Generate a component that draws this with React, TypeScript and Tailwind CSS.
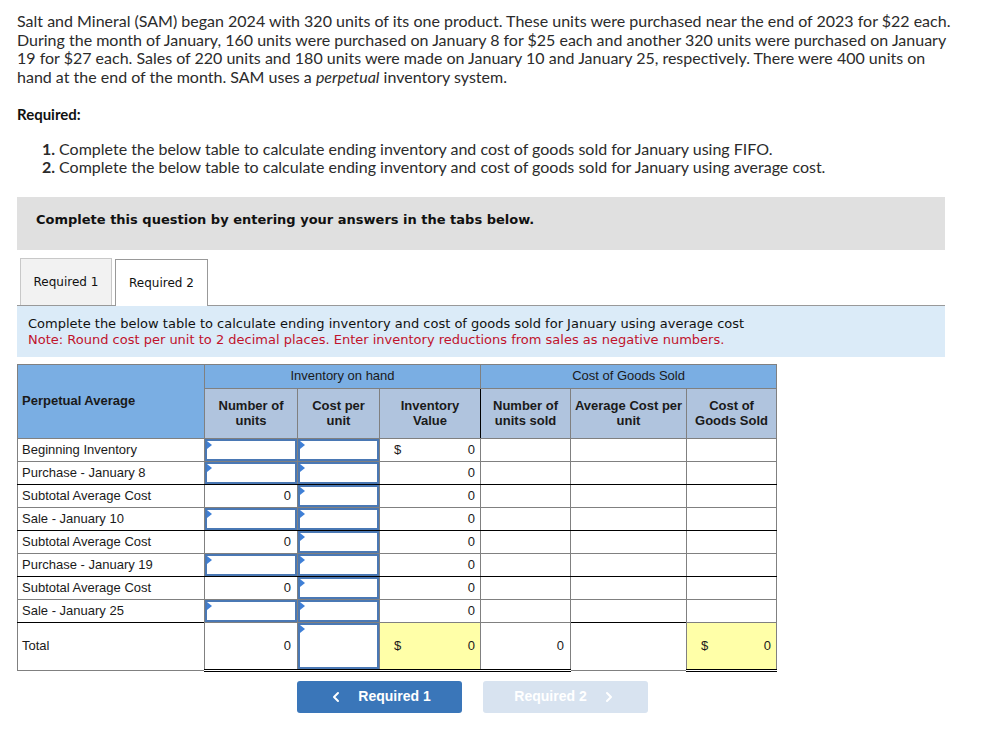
import { ChevronLeft, ChevronRight } from 'lucide-react';

type Row = {
  label: string;
  units: 'input' | '0';
  dollar?: boolean;
};

const rows: Row[] = [
  { label: 'Beginning Inventory', units: 'input', dollar: true },
  { label: 'Purchase - January 8', units: 'input' },
  { label: 'Subtotal Average Cost', units: '0' },
  { label: 'Sale - January 10', units: 'input' },
  { label: 'Subtotal Average Cost', units: '0' },
  { label: 'Purchase - January 19', units: 'input' },
  { label: 'Subtotal Average Cost', units: '0' },
  { label: 'Sale - January 25', units: 'input' },
];

function InputBox({ tall }: { tall?: boolean }) {
  return (
    <div className={`relative w-full border-2 border-[#4a78b4] bg-white ${tall ? 'h-[46px]' : 'h-[22px]'}`}>
      <span className="absolute left-0 top-0 w-0 h-0 border-t-[4px] border-b-[4px] border-l-[5px] border-t-transparent border-b-transparent border-l-[#3f7fd6]" />
    </div>
  );
}

export default function App() {
  return (
    <div className="w-[990px] min-h-[741px] bg-white pl-[17px] pt-[12px] text-[#2b2b2b]">
      {/* Problem text */}
      <p className="font-['Lato',sans-serif] text-[16px] leading-[18.5px] w-[950px]">
        Salt and Mineral (SAM) began 2024 with 320 units of its one product. These units were purchased near the end of 2023 for $22 each.
        <br />
        During the month of January, 160 units were purchased on January 8 for $25 each and another 320 units were purchased on January
        <br />
        19 for $27 each. Sales of 220 units and 180 units were made on January 10 and January 25, respectively. There were 400 units on
        <br />
        hand at the end of the month. SAM uses a <i>perpetual</i> inventory system.
      </p>

      <p className="mt-[17px] font-['Lato',sans-serif] text-[15px] font-bold text-[#111]">Required:</p>

      <div className="mt-[14px] pl-[21px] font-['Lato',sans-serif] text-[16px] leading-[18px]">
        <p><span className="inline-block w-[17px] text-right font-bold">1.</span> Complete the below table to calculate ending inventory and cost of goods sold for January using FIFO.</p>
        <p><span className="inline-block w-[17px] text-right font-bold">2.</span> Complete the below table to calculate ending inventory and cost of goods sold for January using average cost.</p>
      </div>

      {/* Gray banner */}
      <div className="mt-[21px] w-[928px] h-[53px] bg-[#e0e0e0] pl-[19px] pt-[13px] font-['DejaVu_Sans',sans-serif] text-[13px] font-bold text-[#111]">
        Complete this question by entering your answers in the tabs below.
      </div>

      {/* Tabs */}
      <div className="mt-[8px] w-[928px] flex items-end gap-[3px] pl-[3px] border-b border-[#999999]">
        <div className="w-[92px] h-[47px] flex items-center justify-center bg-[#f2f2f2] border border-b-0 border-[#c8c8c8] font-['DejaVu_Sans',sans-serif] text-[12px] text-[#111]">
          Required 1
        </div>
        <div className="w-[93px] h-[47px] -mb-px flex items-center justify-center bg-white border border-b-0 border-[#999999] font-['DejaVu_Sans',sans-serif] text-[12px] text-[#111]">
          Required 2
        </div>
      </div>

      {/* Instruction */}
      <div className="w-[928px] h-[51px] bg-[#dbebf8] pl-[11px] pt-[10px] font-['DejaVu_Sans',sans-serif] text-[13px] leading-[16px]">
        <p className="text-[#111]">Complete the below table to calculate ending inventory and cost of goods sold for January using average cost</p>
        <p className="text-[#c0132c]">Note: Round cost per unit to 2 decimal places. Enter inventory reductions from sales as negative numbers.</p>
      </div>

      {/* Table */}
      <table className="mt-[7px] border-collapse table-fixed w-[759px] font-['Liberation_Sans',Arial,sans-serif] text-[13px] text-[#1a1a1a]">
        <colgroup>
          <col className="w-[187px]" />
          <col className="w-[93px]" />
          <col className="w-[82px]" />
          <col className="w-[101px]" />
          <col className="w-[90px]" />
          <col className="w-[116px]" />
          <col className="w-[90px]" />
        </colgroup>
        <thead>
          <tr className="h-[24px]">
            <th rowSpan={2} className="border border-[#808080] bg-[#7aaee3] text-left align-middle pl-[4px] font-bold">Perpetual Average</th>
            <th colSpan={3} className="border border-[#808080] bg-[#7aaee3] font-normal">Inventory on hand</th>
            <th colSpan={3} className="border border-[#808080] bg-[#7aaee3] font-normal">Cost of Goods Sold</th>
          </tr>
          <tr className="h-[50px] leading-[15px]">
            <th className="border border-[#808080] bg-[#b0c4de] font-bold">Number of<br />units</th>
            <th className="border border-[#808080] bg-[#b0c4de] font-bold">Cost per<br />unit</th>
            <th className="border border-[#808080] border-r-black bg-[#b0c4de] font-bold">Inventory<br />Value</th>
            <th className="border border-[#808080] bg-[#b0c4de] font-bold">Number of<br />units sold</th>
            <th className="border border-[#808080] bg-[#b0c4de] font-bold">Average Cost per<br />unit</th>
            <th className="border border-[#808080] bg-[#b0c4de] font-bold">Cost of<br />Goods Sold</th>
          </tr>
        </thead>
        <tbody>
          {rows.map((row, i) => {
            const bottom = i % 2 === 0 ? 'border-b-[#808080]' : 'border-b-black';
            const cell = `border border-[#808080] ${bottom}`;
            return (
              <tr key={i} className="h-[23px]">
                <td className={`${cell} pl-[4px] whitespace-nowrap`}>{row.label}</td>
                {row.units === 'input' ? (
                  <td className={`${cell} p-0`}>
                    <InputBox />
                  </td>
                ) : (
                  <td className={`${cell} text-right pr-[6px]`}>0</td>
                )}
                <td className={`${cell} p-0`}>
                  <InputBox />
                </td>
                <td className={`${cell} pr-[5px]`}>
                  <div className="flex justify-between">
                    <span className="pl-[14px]">{row.dollar ? '$' : ''}</span>
                    <span>0</span>
                  </div>
                </td>
                <td className={cell} />
                <td className={cell} />
                <td className={cell} />
              </tr>
            );
          })}
          <tr className="h-[46px]">
            <td className="border border-[#808080] pl-[4px]">Total</td>
            <td className="border border-[#808080] border-b-[3px] border-b-black border-double text-right pr-[6px]">0</td>
            <td className="border border-[#808080] border-b-[3px] border-b-black border-double p-0">
              <InputBox tall />
            </td>
            <td className="border border-[#808080] border-b-[3px] border-b-black border-double bg-[#ffffa8] pr-[5px]">
              <div className="flex justify-between">
                <span className="pl-[14px]">$</span>
                <span>0</span>
              </div>
            </td>
            <td className="border border-[#808080] border-b-[3px] border-b-black border-double text-right pr-[6px]">0</td>
            <td className="border border-[#808080]" />
            <td className="border border-[#808080] border-b-[3px] border-b-black border-double bg-[#ffffa8] pr-[5px]">
              <div className="flex justify-between">
                <span className="pl-[14px]">$</span>
                <span>0</span>
              </div>
            </td>
          </tr>
        </tbody>
      </table>

      {/* Nav buttons */}
      <div className="mt-[9px] flex gap-[21px] pl-[280px] font-['Liberation_Sans',Arial,sans-serif] text-[14px] font-bold text-white">
        <button className="w-[165px] h-[32px] rounded-[3px] bg-[#3a76b9] flex items-center justify-center gap-[14px]">
          <ChevronLeft className="w-[16px] h-[16px]" strokeWidth={3} />
          <span>Required 1</span>
        </button>
        <button className="w-[165px] h-[32px] rounded-[3px] bg-[#d8e3f0] flex items-center justify-center gap-[14px]">
          <span>Required 2</span>
          <ChevronRight className="w-[16px] h-[16px]" strokeWidth={3} />
        </button>
      </div>
    </div>
  );
}
